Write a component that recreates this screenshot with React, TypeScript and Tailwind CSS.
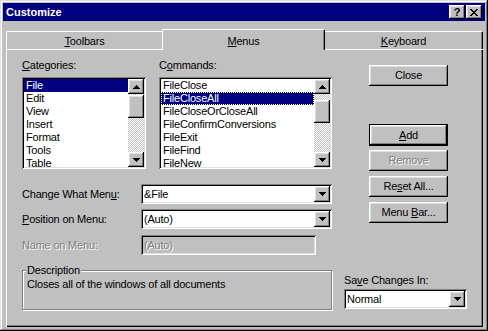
import React from 'react'

const raised = 'shadow-[inset_-1px_-1px_#000,inset_1px_1px_#fff,inset_-2px_-2px_#808080,inset_2px_2px_#dfdfdf]'
const defaultBtn = 'shadow-[inset_0_0_0_1px_#000,inset_-2px_-2px_#000,inset_2px_2px_#fff,inset_-3px_-3px_#808080,inset_3px_3px_#dfdfdf]'
const sunken = 'shadow-[inset_1px_1px_#808080,inset_-1px_-1px_#fff,inset_2px_2px_#000,inset_-2px_-2px_#dfdfdf]'
const disabledText = 'text-[#808080] [text-shadow:1px_1px_0_#fff]'

const DownArrow = () => (
  <svg width="7" height="4" viewBox="0 0 7 4" shapeRendering="crispEdges">
    <path d="M0 0h7v1H0zM1 1h5v1H1zM2 2h3v1H2zM3 3h1v1H3z" fill="#000" />
  </svg>
)

const UpArrow = () => (
  <svg width="7" height="4" viewBox="0 0 7 4" shapeRendering="crispEdges">
    <path d="M3 0h1v1H3zM2 1h3v1H2zM1 2h5v1H1zM0 3h7v1H0z" fill="#000" />
  </svg>
)

const CloseGlyph = () => (
  <svg width="8" height="7" viewBox="0 0 8 7" shapeRendering="crispEdges">
    <path
      d="M0 0h2v1H0zM6 0h2v1H6zM1 1h2v1H1zM5 1h2v1H5zM2 2h4v1H2zM3 3h2v1H3zM2 4h4v1H2zM1 5h2v1H1zM5 5h2v1H5zM0 6h2v1H0zM6 6h2v1H6z"
      fill="#000"
    />
  </svg>
)

const ScrollBar = ({ thumbClass }: { thumbClass: string }) => (
  <div className="flex w-[16px] flex-col">
    <div className={`flex h-[15px] items-center justify-center bg-[#c0c0c0] ${raised}`}>
      <UpArrow />
    </div>
    <div className="flex-1 bg-[image:repeating-conic-gradient(#c0c0c0_0_25%,#fff_0_50%)] bg-[length:2px_2px]">
      <div className={`h-[23px] bg-[#c0c0c0] ${raised} ${thumbClass}`} />
    </div>
    <div className={`flex h-[15px] items-center justify-center bg-[#c0c0c0] ${raised}`}>
      <DownArrow />
    </div>
  </div>
)

type ListProps = { items: string[]; selected: number; focused?: boolean; thumbClass: string }

const ListBox = ({ items, selected, focused, thumbClass }: ListProps) => (
  <div className={`flex h-[92px] bg-white p-[2px] ${sunken}`}>
    <div className="flex-1 overflow-hidden">
      {items.map((item, i) => (
        <div
          key={item}
          className={`h-[13px] pl-[2px] leading-[12px] whitespace-nowrap ${
            i === selected ? 'bg-[#000080] text-white' : 'text-black'
          } ${i === selected && focused ? 'outline-1 -outline-offset-1 outline-dotted outline-[#ffff80]' : ''}`}
        >
          {item}
        </div>
      ))}
    </div>
    <ScrollBar thumbClass={thumbClass} />
  </div>
)

const Combo = ({ value, className }: { value: string; className: string }) => (
  <div className={`flex h-[20px] items-center bg-white p-[2px] ${sunken} ${className}`}>
    <span className="flex-1 pl-[1px] leading-[13px] text-black">{value}</span>
    <div className={`flex h-[16px] w-[16px] items-center justify-center bg-[#c0c0c0] ${raised}`}>
      <DownArrow />
    </div>
  </div>
)

const Btn = ({ children, isDefault, className }: { children: React.ReactNode; isDefault?: boolean; className?: string }) => (
  <button
    className={`flex w-[79px] items-center justify-center bg-[#c0c0c0] leading-[13px] ${
      isDefault ? `h-[22px] ${defaultBtn}` : `h-[21px] ${raised}`
    } ${className ?? ''}`}
  >
    <span className="whitespace-pre">{children}</span>
  </button>
)

export default function App() {
  return (
    <div
      className={`h-[331px] w-[488px] overflow-hidden bg-[#c0c0c0] p-[3px] font-['Liberation_Sans',Arial,sans-serif] text-[11px] tracking-[-0.2px] text-black shadow-[inset_-1px_-1px_#000,inset_1px_1px_#dfdfdf,inset_-2px_-2px_#808080,inset_2px_2px_#fff]`}
    >
      {/* title bar */}
      <div className="flex h-[18px] items-center bg-[#000080] pl-[3px] pr-[3px]">
        <span className="flex-1 text-[11px] font-bold tracking-normal text-white">Customize</span>
        <div className={`flex h-[14px] w-[16px] items-center justify-center bg-[#c0c0c0] ${raised}`}>
          <span className="text-[11px] leading-[11px] font-bold tracking-normal">?</span>
        </div>
        <div className={`ml-px flex h-[14px] w-[16px] items-center justify-center bg-[#c0c0c0] ${raised}`}>
          <CloseGlyph />
        </div>
      </div>

      {/* tabs */}
      <div className="mt-[8px] ml-[3px] flex h-[20px] items-end">
        <div className="h-[18px] w-[156px] rounded-tl-[2px] border-t border-l border-t-white border-l-white pt-[3px] text-center leading-[13px]">
          <u>T</u>oolbars
        </div>
        <div className="relative z-10 -mb-px h-[21px] w-[163px] rounded-t-[2px] border-t border-r border-l border-t-white border-r-black border-l-white bg-[#c0c0c0] pt-[5px] text-center leading-[13px] shadow-[inset_-1px_0_#808080]">
          <u>M</u>enus
        </div>
        <div className="h-[18px] w-[158px] rounded-tr-[2px] border-t border-r border-t-white border-r-black pt-[3px] text-center leading-[13px] shadow-[inset_-1px_0_#808080]">
          <u>K</u>eyboard
        </div>
      </div>

      {/* tab panel */}
      <div className="ml-[3px] flex h-[278px] w-[477px] flex-col pt-[10px] pl-[16px] shadow-[inset_1px_1px_#fff,inset_-1px_-1px_#000,inset_-2px_-2px_#808080]">
        <div className="flex items-start">
          <div className="flex w-[310px] flex-col">
            <div className="flex gap-[13px]">
              <div className="w-[124px]">
                <div className="h-[18px] leading-[13px]">
                  <u>C</u>ategories:
                </div>
                <ListBox
                  items={['File', 'Edit', 'View', 'Insert', 'Format', 'Tools', 'Table']}
                  selected={0}
                  thumbClass="mt-px"
                />
              </div>
              <div className="w-[173px]">
                <div className="h-[18px] leading-[13px]">
                  C<u>o</u>mmands:
                </div>
                <ListBox
                  items={[
                    'FileClose',
                    'FileCloseAll',
                    'FileCloseOrCloseAll',
                    'FileConfirmConversions',
                    'FileExit',
                    'FileFind',
                    'FileNew',
                  ]}
                  selected={1}
                  focused
                  thumbClass="mt-[6px]"
                />
              </div>
            </div>

            <div className="mt-[15px] flex h-[20px] items-center">
              <span className="w-[119px] leading-[13px]">
                Change What Men<u>u</u>:
              </span>
              <Combo value="&File" className="w-[191px]" />
            </div>
            <div className="mt-[5px] flex h-[20px] items-center">
              <span className="w-[119px] leading-[13px]">
                <u>P</u>osition on Menu:
              </span>
              <Combo value="(Auto)" className="w-[191px]" />
            </div>
            <div className="mt-[6px] flex h-[20px] items-center">
              <span className={`w-[119px] leading-[13px] ${disabledText}`}>Name on Menu:</span>
              <div className={`flex h-[20px] w-[175px] items-center bg-[#c0c0c0] p-[2px] ${sunken}`}>
                <span className={`pl-[1px] leading-[13px] ${disabledText}`}>(Auto)</span>
              </div>
            </div>
          </div>

          <div className="ml-[37px] flex flex-col pt-[6px]">
            <Btn>Close</Btn>
            <Btn isDefault className="mt-[38px]">
              <u>A</u>dd
            </Btn>
            <Btn className="mt-[4px]">
              <span className={disabledText}>Remove</span>
            </Btn>
            <Btn className="mt-[5px]">
              Re<u>s</u>et All...
            </Btn>
            <Btn className="mt-[5px]">
              {'Menu '}
              <u>B</u>ar...
            </Btn>
          </div>
        </div>

        <div className="mt-[15px] flex items-start">
          <div className="relative h-[40px] w-[310px] border border-[#808080] pt-[7px] pl-[4px] leading-[13px] shadow-[inset_1px_1px_#fff,1px_1px_#fff]">
            <span className="absolute -top-[7px] left-[3px] bg-[#c0c0c0] px-px leading-[13px]">Description</span>
            Closes all of the windows of all documents
          </div>
          <div className="ml-[12px] flex w-[123px] flex-col">
            <div className="mt-[4px] h-[13px] leading-[13px]">
              Sa<u>v</u>e Changes In:
            </div>
            <Combo value="Normal" className="mt-[2px] w-[123px]" />
          </div>
        </div>
      </div>
    </div>
  )
}
